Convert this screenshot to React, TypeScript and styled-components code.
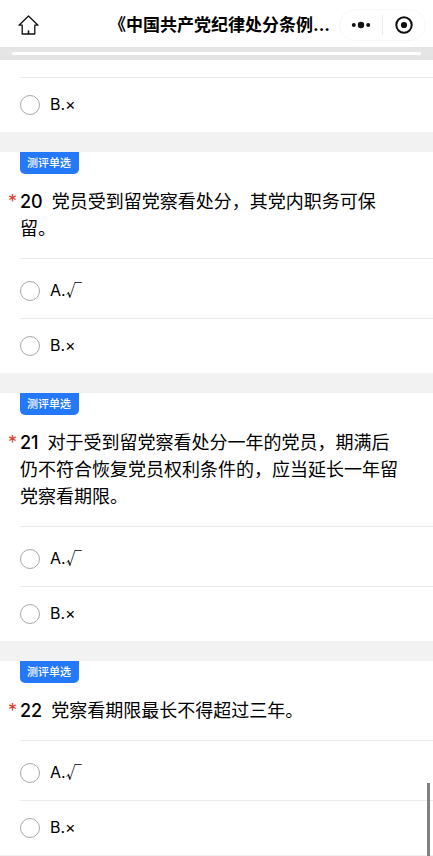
import React from "react";
import styled, { createGlobalStyle } from "styled-components";

const GlobalStyle = createGlobalStyle`
  * { box-sizing: border-box; }
  body {
    margin: 0;
    background: #f2f2f2;
    color: #000;
    font-family: Inter, "Noto Sans CJK SC", sans-serif;
  }
`;

const Page = styled.div`
  display: flex;
  flex-direction: column;
`;

const Header = styled.header`
  display: flex;
  align-items: center;
  height: 47px;
  padding: 3px 7px 0 18px;
  background: #fff;
`;

const IconButton = styled.button`
  display: flex;
  align-items: center;
  justify-content: center;
  padding: 0;
  border: 0;
  background: none;
  color: #111;
`;

const Title = styled.h1`
  flex: 1;
  margin: 0 9px 0 0;
  font-size: 17px;
  line-height: 24px;
  font-weight: 700;
  text-align: right;
  white-space: nowrap;
`;

const Capsule = styled.div`
  display: grid;
  grid-template-columns: 1fr 1px 1fr;
  align-items: center;
  width: 87px;
  height: 32px;
  border: 1px solid #f8f8f8;
  border-radius: 16px;
`;

const CapsuleDivider = styled.span`
  height: 20px;
  background: #ececec;
`;

const ProgressBar = styled.div`
  padding: 5px 12px;
  background: #e5e5e5;
`;

const ProgressFill = styled.div`
  height: 3px;
  border-radius: 2px;
  background: #fff;
`;

const Questions = styled.main`
  display: flex;
  flex-direction: column;
  gap: 20px;
`;

const Card = styled.section<{ $continued?: boolean }>`
  display: flex;
  flex-direction: column;
  align-items: flex-start;
  padding-top: ${(p) => (p.$continued ? "17px" : "0")};
  background: #fff;
`;

const Tag = styled.span`
  height: 22px;
  margin-left: 20px;
  padding: 0 8px 0 7px;
  border-radius: 0 0 5px 5px;
  background: #2478fa;
  color: #fff;
  font-size: 11px;
  line-height: 23px;
  font-weight: 500;
`;

const QuestionRow = styled.div`
  display: grid;
  grid-template-columns: 12px 1fr;
  padding: 14px 30px 16px 8px;
  font-size: 18px;
  line-height: 27px;
`;

const Question = styled.h2`
  margin: 0;
  font-size: inherit;
  font-weight: 400;
`;

const Required = styled.span`
  color: #d8382c;
`;

const Number = styled.span`
  margin-right: 9px;
  font-weight: 500;
`;

const Options = styled.div`
  align-self: stretch;
  margin-left: 20px;
`;

const Option = styled.label<{ $first?: boolean }>`
  display: flex;
  align-items: center;
  gap: 10px;
  height: ${(p) => (p.$first ? "60px" : "55px")};
  padding: ${(p) => (p.$first ? "5px 0 1px" : "0 0 1px")};
  border-top: 1px solid #ebebeb;
  font-size: 16px;
  line-height: 24px;
`;

const OptionText = styled.span`
  padding-bottom: 2px;
`;

const Mark = styled.span`
  font-family: "Noto Sans CJK SC", sans-serif;
`;

const Radio = styled.input`
  appearance: none;
  width: 20px;
  height: 20px;
  margin: 0;
  border: 1px solid #a8a8a8;
  border-radius: 50%;
  background: #fff;

  &:checked {
    border: 6px solid #2478fa;
  }
`;

const ScrollThumb = styled.div`
  position: fixed;
  right: 3px;
  bottom: 0;
  width: 3px;
  height: 73px;
  background: #808080;
`;

const questions = [
  { number: 20, text: "党员受到留党察看处分，其党内职务可保留。" },
  { number: 21, text: "对于受到留党察看处分一年的党员，期满后仍不符合恢复党员权利条件的，应当延长一年留党察看期限。" },
  { number: 22, text: "党察看期限最长不得超过三年。" },
];

function Choice({ name, letter, first }: { name: string; letter: "A" | "B"; first?: boolean }) {
  return (
    <Option $first={first}>
      <Radio type="radio" name={name} value={letter} />
      <OptionText>
        {letter}.{letter === "A" ? <Mark>√</Mark> : "×"}
      </OptionText>
    </Option>
  );
}

export default function App() {
  return (
    <Page>
      <GlobalStyle />
      <Header>
        <IconButton type="button" aria-label="首页">
          <svg width="21" height="20" viewBox="0 0 21 20" fill="none" stroke="currentColor" strokeWidth="1.3" strokeLinejoin="round" strokeLinecap="round">
            <path d="M10.5 1 1 10.2h3.2V19h12.6v-8.8H20Z" />
            <path d="M10.5 16v2.5" strokeWidth="1.6" />
          </svg>
        </IconButton>
        <Title>《中国共产党纪律处分条例...</Title>
        <Capsule>
          <IconButton type="button" aria-label="更多">
            <svg width="20" height="8" viewBox="0 0 20 8" fill="currentColor">
              <circle cx="2.8" cy="4" r="2" />
              <circle cx="10" cy="4" r="3.2" />
              <circle cx="17.2" cy="4" r="2" />
            </svg>
          </IconButton>
          <CapsuleDivider />
          <IconButton type="button" aria-label="关闭">
            <svg width="18" height="18" viewBox="0 0 18 18">
              <circle cx="9" cy="9" r="7.7" fill="none" stroke="currentColor" strokeWidth="2" />
              <circle cx="9" cy="9" r="3.1" fill="currentColor" />
            </svg>
          </IconButton>
        </Capsule>
      </Header>
      <ProgressBar>
        <ProgressFill />
      </ProgressBar>
      <Questions>
        <Card $continued>
          <Options>
            <Choice name="q19" letter="B" />
          </Options>
        </Card>
        {questions.map((q) => (
          <Card key={q.number}>
            <Tag>测评单选</Tag>
            <QuestionRow>
              <Required>*</Required>
              <Question id={`q${q.number}`}>
                <Number>{q.number}</Number>
                {q.text}
              </Question>
            </QuestionRow>
            <Options role="radiogroup" aria-labelledby={`q${q.number}`}>
              <Choice name={`q${q.number}`} letter="A" first />
              <Choice name={`q${q.number}`} letter="B" />
            </Options>
          </Card>
        ))}
      </Questions>
      <ScrollThumb />
    </Page>
  );
}
